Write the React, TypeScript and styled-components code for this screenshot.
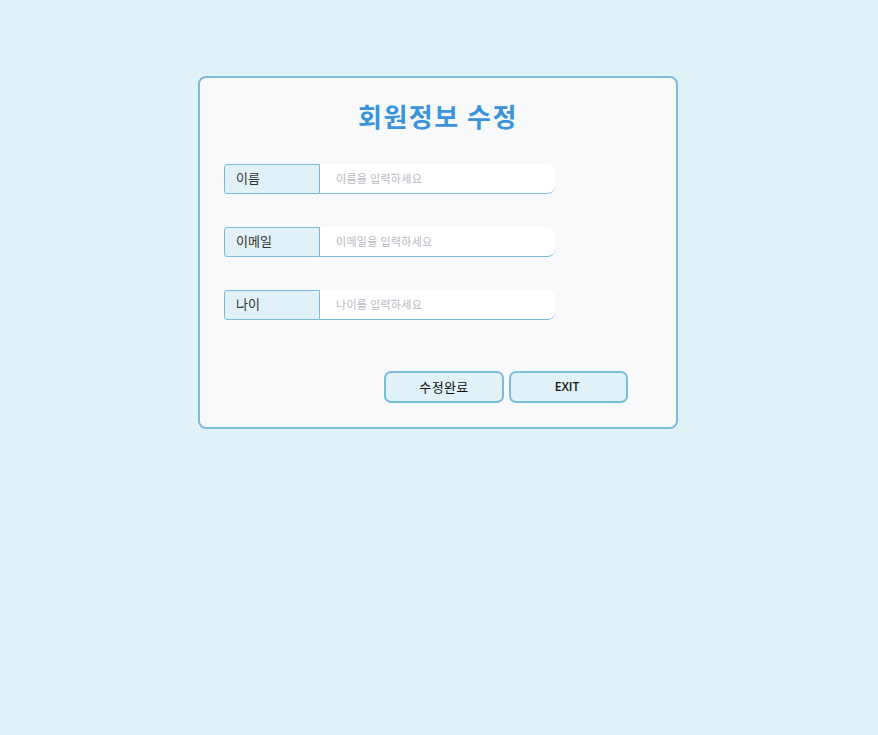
import React from "react";
import styled, { createGlobalStyle } from "styled-components";

const Global = createGlobalStyle`
  html, body { margin: 0; padding: 0; background: #e0f2f8; }
  body { font-family: "Noto Sans CJK KR", "Noto Sans", sans-serif; }
  * { box-sizing: border-box; }
`;

const Page = styled.div`
  min-height: 735px;
  display: flex;
  justify-content: center;
  align-items: flex-start;
  padding-top: 76px;
  padding-right: 2px;
`;

const Card = styled.div`
  width: 480px;
  height: 353px;
  background: #f7f9fb;
  border: 2px solid #7bbdd9;
  border-radius: 8px;
  padding: 18px 24px 0 24px;
  display: flex;
  flex-direction: column;
`;

const Title = styled.h1`
  margin: 0;
  text-align: center;
  font-size: 26px;
  line-height: 40px;
  letter-spacing: 1.5px;
  font-weight: 700;
  color: #3a94dc;
`;

const Fields = styled.div`
  margin-top: 28px;
  display: flex;
  flex-direction: column;
  gap: 33px;
`;

const Row = styled.div`
  display: flex;
  height: 30px;
`;

const Label = styled.label`
  width: 96px;
  height: 30px;
  background: #e0f2f8;
  border: 1px solid #7bbdd9;
  border-radius: 3px 0 0 3px;
  padding: 0 0 3px 11px;
  display: flex;
  align-items: center;
  font-size: 13px;
  color: #333;
`;

const Input = styled.input`
  width: 235px;
  height: 30px;
  border: none;
  border-bottom: 1px solid #7bbdd9;
  border-radius: 0 8px 8px 0;
  background: #fff;
  padding: 0 0 1px 16px;
  font-family: "Noto Sans CJK KR", "Noto Sans", sans-serif;
  font-size: 11px;
  letter-spacing: 0.3px;
  outline: none;
  &::placeholder { color: #b9b9c3; }
`;

const Buttons = styled.div`
  margin-top: 51px;
  display: flex;
  gap: 5px;
  padding-left: 160px;
`;

const Button = styled.button<{ $bold?: boolean }>`
  width: ${(p) => (p.$bold ? "119px" : "120px")};
  height: 32px;
  background: #e0f2f8;
  border: 2px solid #7bbdd9;
  border-radius: 7px;
  font-family: ${(p) => (p.$bold ? '"Open Sans", sans-serif' : '"Noto Sans CJK KR", sans-serif')};
  font-size: ${(p) => (p.$bold ? "12px" : "13px")};
  font-weight: ${(p) => (p.$bold ? 600 : 400)};
  letter-spacing: ${(p) => (p.$bold ? "0" : "0.4px")};
  color: #111;
  padding: ${(p) => (p.$bold ? "0 3px 2px 0" : "0 0 2px 0")};
`;

const fields = [
  { label: "이름", ph: "이름을 입력하세요" },
  { label: "이메일", ph: "이메일을 입력하세요" },
  { label: "나이", ph: "나이를 입력하세요" },
];

export default function App() {
  return (
    <>
      <Global />
      <Page>
        <Card>
          <Title>회원정보 수정</Title>
          <Fields>
            {fields.map((f) => (
              <Row key={f.label}>
                <Label>{f.label}</Label>
                <Input placeholder={f.ph} />
              </Row>
            ))}
          </Fields>
          <Buttons>
            <Button>수정완료</Button>
            <Button $bold>EXIT</Button>
          </Buttons>
        </Card>
      </Page>
    </>
  );
}
